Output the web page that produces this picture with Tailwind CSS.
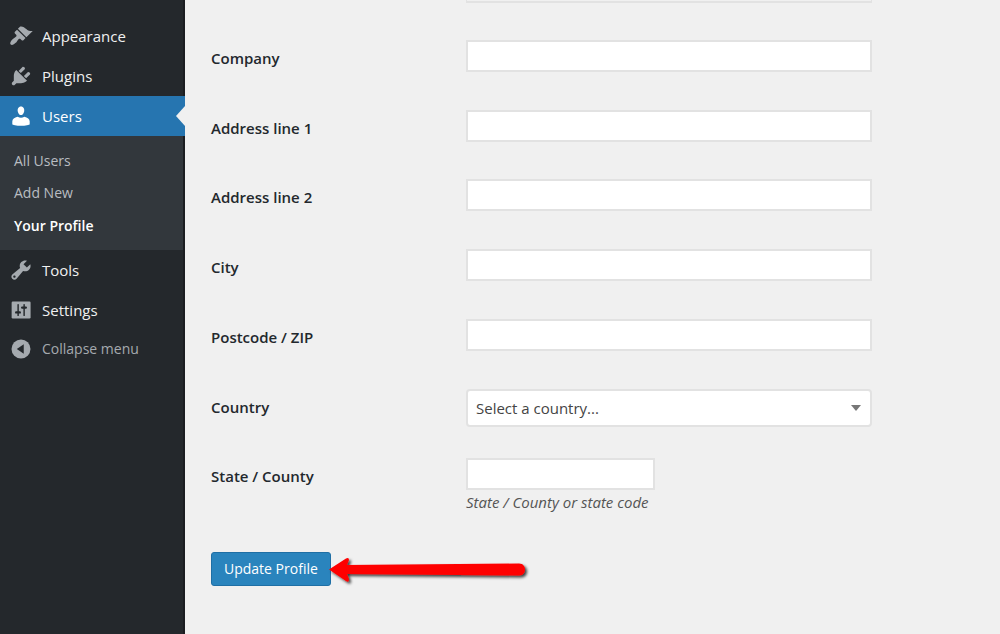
<!DOCTYPE html>
<html lang="en">
<head>
<meta charset="utf-8">
<title>Your Profile</title>
<script src="https://cdn.jsdelivr.net/npm/@tailwindcss/browser@4"></script>
</head>
<body class="flex min-h-screen overflow-hidden bg-[#f0f0f0] font-['Segoe_UI','Open_Sans',sans-serif] text-[15px] leading-5 text-[#23282d]">
<nav aria-label="Main menu" class="w-[185px] shrink-0 border-r-2 border-[#1b1d21] bg-[#24282c] pt-4 font-medium text-[#f0f0f0]">
  <a href="#appearance" class="flex h-10 items-center gap-[9px] pl-[9px]">
    <svg class="size-6 fill-[#a5aaaf]" viewBox="0 0 20 20" aria-hidden="true"><path d="M14.48 11.06L7.41 3.99l1.5-1.5c.5-.56 2.3-.47 3.51.32 1.21.8 1.43 1.28 2.91 2.1 1.18.64 2.45 1.26 4.45.85zm-.71.71L6.7 4.7 4.93 6.47c-.39.39-.39 1.02 0 1.41l1.06 1.06c.39.39.39 1.03 0 1.42-.6.6-1.43 1.11-2.21 1.69-.35.26-.7.53-1.01.84C1.43 14.23.4 16.08 1.4 17.07c.99 1 2.84-.03 4.18-1.36.31-.31.58-.66.85-1.02.57-.78 1.08-1.61 1.69-2.21.39-.39 1.02-.39 1.41 0l1.06 1.06c.39.39 1.02.39 1.41 0z"/></svg>
    Appearance</a>
  <a href="#plugins" class="flex h-10 items-center gap-[9px] pl-[9px]">
    <svg class="size-6 fill-[#a5aaaf]" viewBox="0 0 20 20" aria-hidden="true"><path d="M13.11 4.36L9.87 7.6 8 5.73l3.24-3.24c.35-.34 1.05-.2 1.56.32.52.51.66 1.21.31 1.55zm-8 1.77l.91-1.12 9.01 9.01-1.19.84c-.71.71-2.63 1.16-3.82 1.16H6.14L4.9 17.26c-.59.59-1.54.59-2.12 0-.59-.58-.59-1.53 0-2.12l1.24-1.24v-3.88c0-1.13.4-3.19 1.09-3.89zm7.26 3.97l3.24-3.24c.34-.35 1.04-.21 1.55.31.52.51.66 1.21.31 1.55l-3.24 3.25z"/></svg>
    Plugins</a>
  <a href="#users" aria-current="true" class="relative -mr-[2px] flex h-10 items-center gap-[9px] bg-[#2675b0] pl-[9px] text-white">
    <svg class="size-6 fill-white" viewBox="0 0 20 20" aria-hidden="true"><path d="M10 9.25c-2.27 0-2.73-3.44-2.73-3.44C7 4.02 7.82 2 9.97 2c2.16 0 2.98 2.02 2.71 3.81 0 0-.41 3.44-2.68 3.44zM7.200 10.600Q10 12.400 12.800 10.600C15.500 11 17.240 12.700 17.240 14.530v2.490s-3.650 1.130-7.240 1.130c-3.650 0-7.240-1.130-7.240-1.130v-2.490C2.760 12.700 4.500 11 7.200 10.600z"/></svg>
    Users
    <span class="absolute right-0 top-1/2 h-5 w-[9px] -translate-y-1/2 bg-[#f0f0f0] [clip-path:polygon(100%_0,100%_100%,0_50%)]"></span></a>
  <ul class="bg-[#32373c] py-2 pl-[14px] text-sm text-[#b9bdc1]">
    <li><a href="#all-users" class="flex h-[33px] items-center">All Users</a></li>
    <li><a href="#add-new" class="flex h-8 items-center">Add New</a></li>
    <li><a href="#profile" class="flex h-[33px] items-center font-semibold text-white">Your Profile</a></li>
  </ul>
  <a href="#tools" class="flex h-10 items-center gap-[9px] pl-[9px]">
    <svg class="size-6 fill-[#a5aaaf]" viewBox="0 0 20 20" aria-hidden="true"><path d="M16.68 9.77c-1.34 1.34-3.3 1.67-4.95.99l-5.41 6.52c-.99.99-2.59.99-3.58 0s-.99-2.59 0-3.57l6.52-5.42c-.68-1.65-.35-3.61.99-4.95 1.28-1.28 3.12-1.62 4.72-1.06l-2.89 2.89 2.82 2.82 2.86-2.87c.53 1.58.18 3.39-1.08 4.65zM3.81 16.21c.4.39 1.04.39 1.43 0 .4-.4.4-1.04 0-1.43-.39-.4-1.03-.4-1.43 0-.39.39-.39 1.03 0 1.43z"/></svg>
    Tools</a>
  <a href="#settings" class="flex h-[39px] items-center gap-[9px] pl-[9px]">
    <svg class="size-6" viewBox="0 0 20 20" aria-hidden="true"><rect x="2.2" y="3" width="15.8" height="14" rx="1" fill="#a5aaaf"/><path fill="#24282c" d="M7 5.5a.6.6 0 0 1 1.200 0V11H9a1 1 0 0 1 0 2h-.8v1.500a.6.6 0 0 1-1.200 0V13H6a1 1 0 0 1 0-2h1zM12 5.500a.6.6 0 0 1 1.200 0V7H14a1 1 0 0 1 0 2h-.8v5.500a.6.6 0 0 1-1.200 0V9h-1a1 1 0 0 1 0-2h1z"/></svg>
    Settings</a>
  <button type="button" class="flex h-10 w-full items-center gap-[9px] pl-[9px] text-sm text-[#a5aaaf]">
    <svg class="size-6" viewBox="0 0 20 20" aria-hidden="true"><circle cx="10" cy="10" r="7.900" fill="#a5aaaf"/><path d="M12.300 6v8L6.500 10z" fill="#24282c"/></svg>
    Collapse menu</button>
</nav>
<main class="min-w-0 flex-1 pl-[26px] pr-32">
  <form>
    <div class="flex h-10 items-start pl-[255px]"><div class="h-[3px] w-full border-x border-b-2 border-[#e2e2e2]"></div></div>
    <div class="grid h-[488px] auto-rows-fr grid-cols-[255px_minmax(0,1fr)] items-start">
      <label for="company" class="pt-2 font-semibold">Company</label>
      <input id="company" class="h-8 w-full border-2 border-[#e2e2e2] bg-white px-2">
      <label for="address1" class="pt-2 font-semibold">Address line 1</label>
      <input id="address1" class="h-8 w-full border-2 border-[#e2e2e2] bg-white px-2">
      <label for="address2" class="pt-2 font-semibold">Address line 2</label>
      <input id="address2" class="h-8 w-full border-2 border-[#e2e2e2] bg-white px-2">
      <label for="city" class="pt-2 font-semibold">City</label>
      <input id="city" class="h-8 w-full border-2 border-[#e2e2e2] bg-white px-2">
      <label for="postcode" class="pt-2 font-semibold">Postcode / ZIP</label>
      <input id="postcode" class="h-8 w-full border-2 border-[#e2e2e2] bg-white px-2">
      <label for="country" class="pt-2 font-semibold">Country</label>
      <div class="relative">
        <select id="country" class="h-[38px] w-full appearance-none rounded border-2 border-[#e2e2e2] bg-white px-2 text-[#444]"><option>Select a country...</option></select>
        <svg class="pointer-events-none absolute right-[11px] top-4 h-[6px] w-[10px] fill-[#777]" viewBox="0 0 10 6" aria-hidden="true"><path d="M0 0h10L5 6z"/></svg>
      </div>
      <label for="state" class="pt-2 font-semibold">State / County</label>
      <div>
        <input id="state" aria-describedby="state-hint" class="block h-8 w-[189px] border-2 border-[#e2e2e2] bg-white px-2">
        <p id="state-hint" class="leading-6 text-[#555] italic">State / County or state code</p>
      </div>
    </div>
    <div class="flex items-center pt-6">
      <button type="submit" class="h-[34px] shrink-0 rounded-[3px] border border-[#1f6fa5] bg-[#2a84bd] px-3 text-sm font-medium text-white">Update Profile</button>
      <svg class="z-10 -ml-[2px] h-[34px] w-[198px] shrink-0 overflow-visible" viewBox="0 0 198 34" aria-hidden="true">
        <defs><filter id="shadow" x="-5%" y="-30%" width="112%" height="180%"><feDropShadow dx="2" dy="2" stdDeviation="1.500" flood-color="#000" flood-opacity=".75"/></filter></defs>
        <path filter="url(#shadow)" fill="#fe0000" d="M0 17.500 17 6.500Q20 5 20 8L18 13 190 11.500C198 11.500 198 23.500 190 23.500L18 22 20 27Q20 31 17 29Z"/>
      </svg>
    </div>
  </form>
</main>
</body>
</html>
